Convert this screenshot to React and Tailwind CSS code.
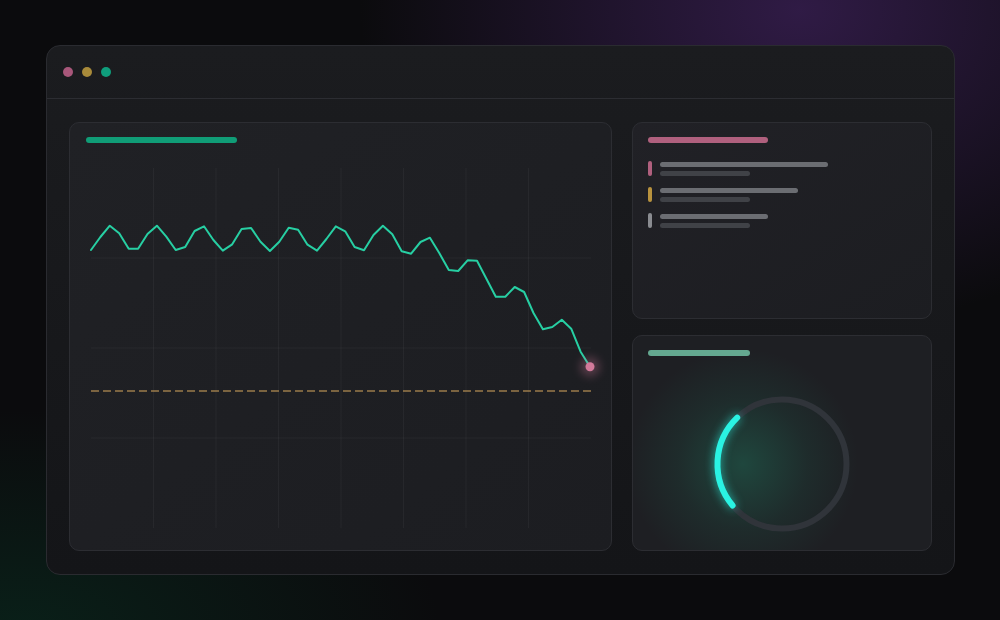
import React from "react"

// y-values of the trend line, in chart coordinates (origin at top-left of the plot)
const points = [
  82, 69, 57.7, 65.3, 80.7, 80.7, 66, 57.7, 68.7, 82, 79, 63, 58.3, 72, 82.7, 76.3, 61, 60,
  73.7, 83, 73.7, 59.7, 61.7, 76.7, 82.7, 71, 58.3, 63.3, 79, 82.3, 67, 57.7, 66.3, 83.3,
  85.7, 74, 69.7, 85.3, 102, 103, 92.3, 92.7, 110.7, 128.7, 128.7, 119, 124, 145, 161.3,
  159, 151.7, 160.7, 183.7, 198.7,
]

const step = 499 / (points.length - 1)
const linePath = points.map((y, i) => `${i === 0 ? "M" : "L"}${(i * step).toFixed(1)} ${y}`).join(" ")

const items = [
  { accent: "bg-[#b0607e]", width: "w-[168px]" },
  { accent: "bg-[#b8923e]", width: "w-[138px]" },
  { accent: "bg-[#8a8c91]", width: "w-[108px]" },
]

const TrendCard = () => (
  <div className="h-[429px] rounded-[10px] border border-[#2c2d32] bg-gradient-to-br from-[#202125] to-[#1c1d21] pt-[14px] pl-4">
    <div className="h-[6px] w-[151px] rounded-full bg-[#109d77]"></div>
    <svg width="501" height="360" className="ml-[5px] mt-[25px] overflow-visible">
      <defs>
        <filter id="dotGlow" x="-200%" y="-200%" width="500%" height="500%">
          <feGaussianBlur stdDeviation="4" />
        </filter>
      </defs>
      {[1, 2, 3, 4, 5, 6, 7].map((k) => (
        <line key={k} x1={k * 62.5} y1="0" x2={k * 62.5} y2="360" stroke="#ffffff" strokeOpacity="0.045" />
      ))}
      {[90, 180, 270].map((y) => (
        <line key={y} x1="0" y1={y} x2="500" y2={y} stroke="#ffffff" strokeOpacity="0.045" />
      ))}
      <line x1="0" y1="223" x2="500" y2="223" stroke="#b08c52" strokeOpacity="0.85" strokeDasharray="8 4" strokeWidth="1.3" />
      <path d={linePath} fill="none" stroke="#27cfa3" strokeWidth="2" strokeLinejoin="round" strokeLinecap="round" />
      <circle cx="499" cy="198.7" r="10" fill="#d27a9a" opacity="0.3" filter="url(#dotGlow)" />
      <circle cx="499" cy="198.7" r="4.5" fill="#d27a9a" />
    </svg>
  </div>
)

const ListCard = () => (
  <div className="h-[197px] rounded-[10px] border border-[#2c2d32] bg-gradient-to-br from-[#212126] to-[#1c1d21] pt-[14px] pl-[15px]">
    <div className="h-[6px] w-[120px] rounded-full bg-[#b0607e]"></div>
    <div className="mt-[18px] space-y-[11px]">
      {items.map((item, i) => (
        <div key={i} className="flex gap-2">
          <div className={`h-[15px] w-[4px] rounded-full ${item.accent}`}></div>
          <div className="pt-px">
            <div className={`h-[5px] rounded-full bg-[#6b6d72] ${item.width}`}></div>
            <div className="mt-[4px] h-[5px] w-[90px] rounded-full bg-[#404247]"></div>
          </div>
        </div>
      ))}
    </div>
  </div>
)

const GaugeCard = () => (
  <div className="h-[216px] rounded-[10px] border border-[#2c2d32] bg-[#1e1f23] bg-[radial-gradient(circle_at_110px_128px,rgba(32,110,88,0.5),rgba(32,110,88,0.16)_65px,transparent_115px)] pt-[14px] pl-[15px]">
    <div className="h-[6px] w-[102px] rounded-full bg-[#64a890]"></div>
    <div className="flex justify-center pr-[15px]">
      <svg width="136" height="136" className="mt-[40px] overflow-visible">
        <circle cx="68" cy="68" r="64.5" fill="none" stroke="#30343a" strokeWidth="6" />
        <path
          d="M18.6 109.5 A64.5 64.5 0 0 1 23.2 21.6"
          fill="none"
          stroke="#2af3e3"
          strokeWidth="6"
          strokeLinecap="round"
          className="drop-shadow-[0_0_5px_rgba(42,243,227,0.7)]"
        />
      </svg>
    </div>
  </div>
)

const App = () => {
  return (
    <div className="h-[620px] w-[1000px] overflow-hidden bg-[#0b0b0d] bg-[radial-gradient(ellipse_440px_320px_at_800px_10px,rgba(60,32,88,0.75),transparent),radial-gradient(ellipse_420px_220px_at_20px_630px,rgba(8,52,36,0.5),transparent)] pl-[46px] pt-[45px]">
      <div className="h-[530px] w-[909px] rounded-[14px] border border-[#2a2b30] bg-gradient-to-b from-[#1b1c1f] to-[#141518]">
        <div className="flex h-[53px] items-center gap-[9px] border-b border-[#2c2d32] pl-4">
          <div className="h-[10px] w-[10px] rounded-full bg-[#a8577a]"></div>
          <div className="h-[10px] w-[10px] rounded-full bg-[#a88a3a]"></div>
          <div className="h-[10px] w-[10px] rounded-full bg-[#0f9e7c]"></div>
        </div>
        <div className="grid grid-cols-[543px_300px] gap-5 pl-[22px] pt-[23px]">
          <TrendCard />
          <div className="flex flex-col gap-4">
            <ListCard />
            <GaugeCard />
          </div>
        </div>
      </div>
    </div>
  )
}

export default App
